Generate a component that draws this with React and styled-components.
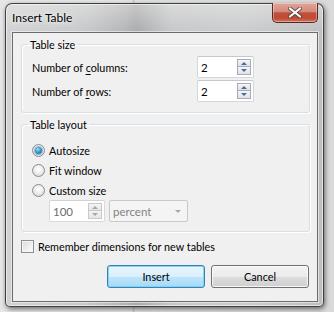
import React from "react";
import styled, { createGlobalStyle } from "styled-components";

const GlobalStyle = createGlobalStyle`
  html, body { margin: 0; padding: 0; }
  body {
    background: #e4e4e4;
    font-family: "Segoe UI", Lato, "Open Sans", sans-serif;
    font-size: 10.8px;
    color: #000;
  }
`;

const Stage = styled.div`
  padding: 3px 0 0 5px;
  width: 334px;
  height: 312px;
  box-sizing: border-box;
  background: linear-gradient(90deg, #e6e6e6 0%, #e6e6e6 39.5%, #c9c9c9 40%, #e2e2e2 40.5%, #dadada 100%);
`;

const Window = styled.div`
  box-sizing: border-box;
  width: 319px;
  height: 304px;
  display: flex;
  flex-direction: column;
  border: 1px solid rgba(40, 40, 40, 0.85);
  border-radius: 7px 7px 5px 5px;
  background:
    linear-gradient(180deg, rgba(255,255,255,0.35) 0px, rgba(255,255,255,0.05) 26px, rgba(255,255,255,0) 60px),
    linear-gradient(90deg, #cfd0d1 0%, #c6c7c8 25%, #b1b2b3 38%, #a8a9aa 41%, #c5c6c7 52%, #c9cacb 75%, #bdbebf 100%);
  box-shadow:
    inset 0 0 0 1px rgba(255,255,255,0.55),
    1px 2px 5px rgba(0,0,0,0.55);
`;

const TitleBar = styled.div`
  height: 28px;
  display: flex;
  align-items: flex-start;
  padding-left: 6px;
`;

const Title = styled.span`
  line-height: 28px;
  font-size: 12px;
  color: #000;
  text-shadow: 0 0 8px rgba(255,255,255,0.9), 0 0 3px rgba(255,255,255,0.9);
`;

const CloseButton = styled.div`
  margin-left: auto;
  margin-right: 5px;
  margin-top: -1px;
  width: 46px;
  height: 20px;
  box-sizing: border-box;
  border: 1px solid #5a2a22;
  border-top: none;
  border-radius: 0 0 5px 5px;
  background: linear-gradient(180deg, #e2a497 0%, #d48a7c 45%, #c0503c 52%, #c14a33 80%, #cf7561 100%);
  box-shadow: inset 0 0 0 1px rgba(255,255,255,0.35);
  display: flex;
  align-items: center;
  justify-content: center;
`;

const Client = styled.div`
  flex: 1;
  margin: 0 5px 4px 6px;
  border: 1px solid #6b6b6b;
  box-shadow: 0 0 0 1px rgba(255,255,255,0.5);
  background: #f0f0f0;
  padding: 4px 7px 0 8px;
  display: flex;
  flex-direction: column;
`;

const Group = styled.fieldset`
  margin: 0 0 ${p => p.$gap || 0}px 0;
  min-width: 0;
  border: 1px solid #d5dfe5;
  border-radius: 3px;
  box-shadow: inset 1px 1px 0 #fff, 1px 1px 0 #fff;
  padding: 0;
`;

const GroupBody = styled.div`
  padding: ${p => p.$pt}px 10px ${p => p.$pb}px 10px;
`;

const Legend = styled.legend`
  margin-left: 6px;
  padding: 0 2px;
  line-height: 15px;
`;

const SpinGrid = styled.div`
  display: grid;
  grid-template-columns: 165px 57px;
  row-gap: 2px;
  align-items: center;
`;

const Label = styled.span`
  line-height: 15px;
`;

const Key = styled.span`
  text-decoration: underline;
  text-underline-offset: 2px;
`;

const SpinBox = styled.div`
  box-sizing: border-box;
  width: ${p => p.$w}px;
  height: 22px;
  border: 1px solid ${p => (p.$disabled ? "#d9d9d9" : "#d3d6db")};
  border-top-color: ${p => (p.$disabled ? "#d2d2d2" : "#c4c7cc")};
  border-radius: 2px;
  background: #fff;
  display: flex;
  align-items: center;
  padding: 0 2px 0 3px;
  color: ${p => (p.$disabled ? "#6d6d6d" : "#000")};
  font-size: 11.5px;
`;

const SpinValue = styled.span`
  flex: 1;
`;

const SpinButtons = styled.div`
  display: flex;
  flex-direction: column;
  width: 14px;
`;

const SpinBtn = styled.div`
  box-sizing: border-box;
  height: 8px;
  border: 1px solid ${p => (p.$disabled ? "#c9c9c9" : "#a7acb4")};
  ${p => (p.$down ? "border-top: none;" : "")}
  background: ${p => (p.$disabled ? "linear-gradient(#f4f4f4, #e6e6e6)" : "linear-gradient(#f5f6f8, #dfe2e7)")};
  display: flex;
  align-items: center;
  justify-content: center;
`;

const Arrow = styled.div`
  width: 0;
  height: 0;
  border-left: 3px solid transparent;
  border-right: 3px solid transparent;
  ${p => (p.$down ? "border-top" : "border-bottom")}: 3px solid ${p => (p.$disabled ? "#a8a8a8" : "#4e6a9a")};
`;

const RadioList = styled.div`
  display: flex;
  flex-direction: column;
`;

const OptionRow = styled.div`
  display: flex;
  align-items: center;
  gap: 4px;
  height: 20px;
  line-height: 15px;
`;

const RadioCircle = styled.div`
  box-sizing: border-box;
  width: 13px;
  height: 13px;
  border-radius: 50%;
  border: 1px solid #8b8c8d;
  background: radial-gradient(circle at 50% 40%, #ffffff 0%, #f0f0f0 40%, #cfcfcf 100%);
  display: flex;
  align-items: center;
  justify-content: center;
`;

const RadioDot = styled.div`
  width: 7px;
  height: 7px;
  border-radius: 50%;
  background: radial-gradient(circle at 40% 35%, #a9e0fb 0%, #3a9fd8 40%, #0d5d98 100%);
  box-shadow: 0 0 0 1px rgba(20, 70, 120, 0.35);
`;

const CustomRow = styled.div`
  display: flex;
  gap: 4px;
  margin-left: 17px;
`;

const Dropdown = styled.div`
  box-sizing: border-box;
  width: 79px;
  height: 22px;
  border: 1px solid #c9c9c9;
  border-radius: 2px;
  background: #f4f4f4;
  color: #838383;
  font-size: 11.5px;
  display: flex;
  align-items: center;
  justify-content: space-between;
  padding: 0 6px 0 3px;
`;

const CheckRow = styled.div`
  display: flex;
  align-items: center;
  gap: 4px;
  margin-top: 7px;
  line-height: 15px;
`;

const CheckBox = styled.div`
  box-sizing: border-box;
  width: 13px;
  height: 13px;
  border: 1px solid #8e8f8f;
  background: linear-gradient(135deg, #d8d8d8 0%, #f0f0f0 60%, #fbfbfb 100%);
  box-shadow: inset 0 0 0 1px #f4f4f4;
`;

const ButtonRow = styled.div`
  display: flex;
  justify-content: flex-end;
  gap: 6px;
  margin-top: 11px;
  padding-right: 1px;
`;

const Button = styled.div`
  box-sizing: border-box;
  width: 98px;
  height: 23px;
  border-radius: 3px;
  display: flex;
  align-items: center;
  justify-content: center;
  border: 1px solid ${p => (p.$default ? "#3c7fb1" : "#707070")};
  background: ${p =>
    p.$default
      ? "linear-gradient(180deg, #eaf6fd 0%, #d9f0fc 50%, #bee6fd 51%, #a7d9f5 100%)"
      : "linear-gradient(180deg, #f2f2f2 0%, #ebebeb 50%, #dddddd 51%, #cfcfcf 100%)"};
  box-shadow: inset 0 0 0 1px ${p => (p.$default ? "rgba(120, 210, 250, 0.9)" : "rgba(255,255,255,0.8)")};
`;

function Spin({ value, width, disabled }) {
  return (
    <SpinBox $w={width} $disabled={disabled}>
      <SpinValue>{value}</SpinValue>
      <SpinButtons>
        <SpinBtn $disabled={disabled}>
          <Arrow $disabled={disabled} />
        </SpinBtn>
        <SpinBtn $down $disabled={disabled}>
          <Arrow $down $disabled={disabled} />
        </SpinBtn>
      </SpinButtons>
    </SpinBox>
  );
}

function Radio({ checked, children }) {
  return (
    <OptionRow>
      <RadioCircle>{checked && <RadioDot />}</RadioCircle>
      <span>{children}</span>
    </OptionRow>
  );
}

export default function App() {
  return (
    <>
      <GlobalStyle />
      <Stage>
        <Window>
          <TitleBar>
            <Title>Insert Table</Title>
            <CloseButton>
              <svg width="14" height="11" viewBox="0 0 14 11">
                <path
                  d="M2 1.5 L12 9.5 M12 1.5 L2 9.5"
                  stroke="#3b3b3b"
                  strokeWidth="4"
                  strokeLinecap="round"
                  opacity="0.7"
                />
                <path
                  d="M2 1.5 L12 9.5 M12 1.5 L2 9.5"
                  stroke="#ffffff"
                  strokeWidth="2.2"
                  strokeLinecap="round"
                />
              </svg>
            </CloseButton>
          </TitleBar>
          <Client>
            <Group $gap={4}>
              <Legend>Table size</Legend>
              <GroupBody $pt={4} $pb={10}>
                <SpinGrid>
                  <Label>
                    Number of <Key>c</Key>olumns:
                  </Label>
                  <Spin value="2" width={57} />
                  <Label>
                    Number of <Key>r</Key>ows:
                  </Label>
                  <Spin value="2" width={57} />
                </SpinGrid>
              </GroupBody>
            </Group>
            <Group>
              <Legend>Table layout</Legend>
              <GroupBody $pt={8} $pb={9}>
                <RadioList>
                  <Radio checked>Autosize</Radio>
                  <Radio>Fit window</Radio>
                  <Radio>Custom size</Radio>
                  <CustomRow>
                    <Spin value="100" width={56} disabled />
                    <Dropdown>
                      <span>percent</span>
                      <Arrow $down $disabled />
                    </Dropdown>
                  </CustomRow>
                </RadioList>
              </GroupBody>
            </Group>
            <CheckRow>
              <CheckBox />
              <span>Remember dimensions for new tables</span>
            </CheckRow>
            <ButtonRow>
              <Button $default>Insert</Button>
              <Button>Cancel</Button>
            </ButtonRow>
          </Client>
        </Window>
      </Stage>
    </>
  );
}
